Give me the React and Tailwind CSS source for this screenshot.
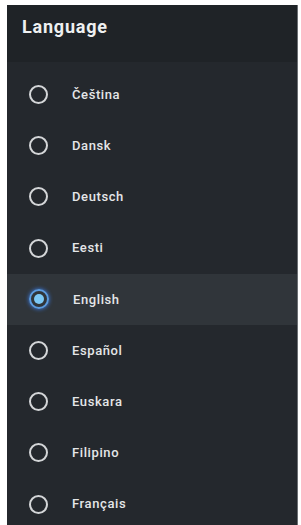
const langs = ['Čeština','Dansk','Deutsch','Eesti','English','Español','Euskara','Filipino','Français']

function Radio({ on }) {
  return on ? (
    <div className="w-[20px] h-[20px] rounded-full border-2 border-[#5b9be0] flex items-center justify-center shadow-[0_0_4px_#3b82f6]">
      <div className="w-[10px] h-[10px] rounded-full bg-[#7cc8f5]"/>
    </div>
  ) : (
    <div className="w-[19px] h-[19px] rounded-full border-2 border-[#d4d6d8]"/>
  )
}

export default function App() {
  return (
    <div className="w-[301px] h-[525px] bg-white pt-[5px] pl-[7px] pr-[3px] overflow-hidden" style={{fontFamily:'Roboto, "Noto Sans", sans-serif'}}>
      <div className="h-full bg-[#24282d] border-r border-[#6b6f73] flex flex-col overflow-hidden">
        <div className="h-[57px] shrink-0 bg-[#1f2327] flex items-start pl-[15px] pt-[8px]">
          <span className="text-[#eef0f1] text-[18px] font-bold tracking-[0.8px]">Language</span>
        </div>
        <div className="pt-[7px] shrink-0">
          {langs.map(l => (
            <div key={l} className={'h-[51.2px] flex items-center pl-[22px] ' + (l==='English' ? 'bg-[#30353a]' : '')}>
              <Radio on={l==='English'}/>
              <span className="ml-[24px] text-[13px] text-[#e4e6e8] font-medium tracking-[0.6px]">{l}</span>
            </div>
          ))}
        </div>
      </div>
    </div>
  )
}
